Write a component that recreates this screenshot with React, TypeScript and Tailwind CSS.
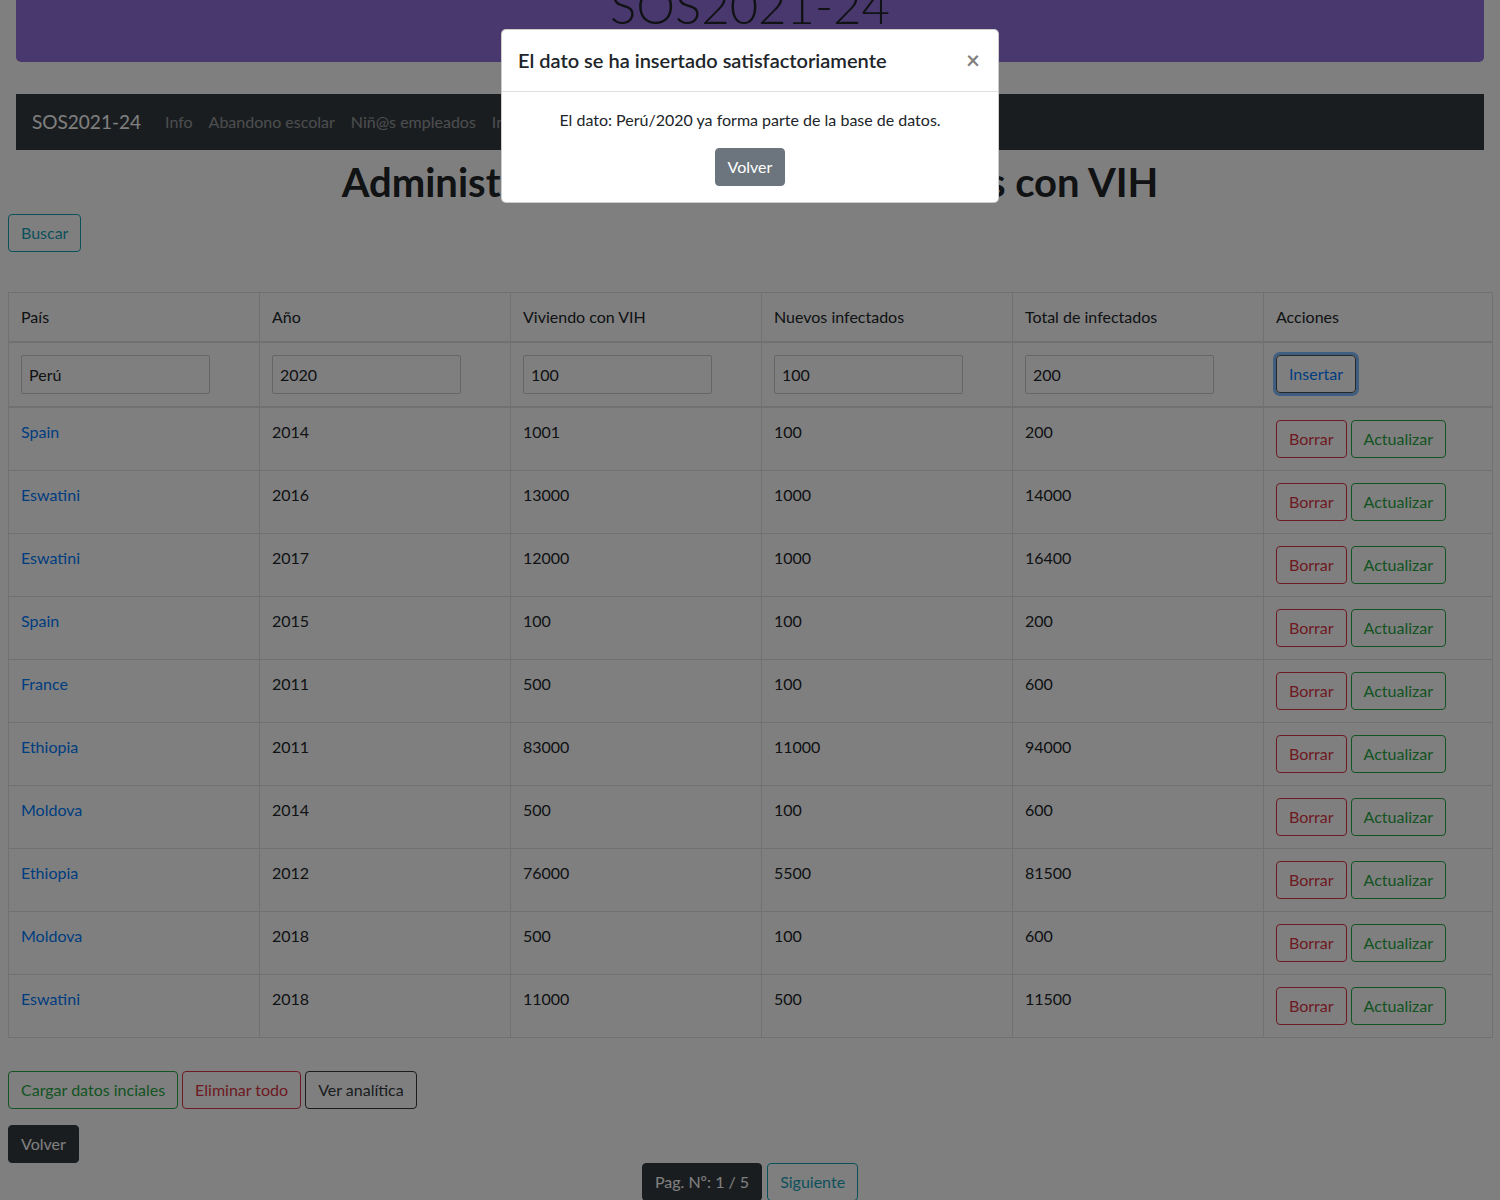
import React from 'react';

// Rows of the VIH table
interface Row {
  country: string;
  year: number;
  living: number;
  newInfected: number;
  total: number;
}

const rows: Row[] = [
  { country: 'Spain', year: 2014, living: 1001, newInfected: 100, total: 200 },
  { country: 'Eswatini', year: 2016, living: 13000, newInfected: 1000, total: 14000 },
  { country: 'Eswatini', year: 2017, living: 12000, newInfected: 1000, total: 16400 },
  { country: 'Spain', year: 2015, living: 100, newInfected: 100, total: 200 },
  { country: 'France', year: 2011, living: 500, newInfected: 100, total: 600 },
  { country: 'Ethiopia', year: 2011, living: 83000, newInfected: 11000, total: 94000 },
  { country: 'Moldova', year: 2014, living: 500, newInfected: 100, total: 600 },
  { country: 'Ethiopia', year: 2012, living: 76000, newInfected: 5500, total: 81500 },
  { country: 'Moldova', year: 2018, living: 500, newInfected: 100, total: 600 },
  { country: 'Eswatini', year: 2018, living: 11000, newInfected: 500, total: 11500 },
];

const variants = {
  'outline-info': 'border-[#17a2b8] text-[#17a2b8] bg-transparent',
  'outline-danger': 'border-[#dc3545] text-[#dc3545] bg-transparent',
  'outline-success': 'border-[#28a745] text-[#28a745] bg-transparent',
  'outline-dark': 'border-[#343a40] text-[#343a40] bg-transparent',
  'outline-primary': 'border-[#4a4f55] text-[#007bff] bg-transparent shadow-[0_0_0_3px_rgba(0,123,255,0.5)]',
  dark: 'border-[#343a40] bg-[#343a40] text-white',
  secondary: 'border-[#6c757d] bg-[#6c757d] text-white',
};

function Btn({ variant, children }: { variant: keyof typeof variants; children: React.ReactNode }) {
  return (
    <button
      className={`inline-flex items-center h-[38px] px-3 border rounded text-base leading-6 ${variants[variant]}`}
    >
      {children}
    </button>
  );
}

const inputs = ['Perú', '2020', '100', '100', '200'];
const headers = ['País', 'Año', 'Viviendo con VIH', 'Nuevos infectados', 'Total de infectados', 'Acciones'];

export default function App() {
  return (
    <div className="relative min-h-[1200px] bg-white text-[#212529] font-['Lato','Liberation_Sans',sans-serif] text-base leading-6 overflow-hidden">
      <main className="px-2">
        {/* Banner */}
        <div className="mx-2 h-[62px] bg-[#9370db] rounded-b-[5px] overflow-hidden text-center">
          <div className="mt-[-24px] text-[49px] leading-[1.2] font-light text-[#212529]">SOS2021-24</div>
        </div>

        {/* Navbar */}
        <nav className="mx-2 mt-8 h-14 bg-[#343a40] flex items-center px-4">
          <span className="text-[19px] text-white mr-4">SOS2021-24</span>
          {['Info', 'Abandono escolar', 'Niñ@s empleados', 'Infectados VIH', 'Integraciones'].map((l) => (
            <a key={l} className="px-2 text-white/50">
              {l}
            </a>
          ))}
        </nav>

        <h1 className="mt-2 mb-2 text-center text-[40px] leading-[1.2] font-bold">
          Administrador de datos de infectados con VIH
        </h1>

        <Btn variant="outline-info">Buscar</Btn>

        {/* Table */}
        <table className="mt-10 w-[1484px] table-fixed border-collapse border border-[#dee2e6]">
          <colgroup>
            <col className="w-[251px]" />
            <col className="w-[251px]" />
            <col className="w-[251px]" />
            <col className="w-[251px]" />
            <col className="w-[251px]" />
            <col className="w-[229px]" />
          </colgroup>
          <thead>
            <tr>
              {headers.map((h) => (
                <th key={h} className="p-3 text-left font-normal align-top border border-[#dee2e6] border-b-2">
                  {h}
                </th>
              ))}
            </tr>
            <tr>
              {inputs.map((v, i) => (
                <td key={i} className="p-3 align-top border border-[#dee2e6] border-b-2">
                  <input
                    readOnly
                    value={v}
                    className="block w-[189px] h-[39px] px-[7px] border border-[#ccc] rounded-[2px] text-[#212529] bg-white"
                  />
                </td>
              ))}
              <td className="p-3 align-top border border-[#dee2e6] border-b-2">
                <Btn variant="outline-primary">Insertar</Btn>
              </td>
            </tr>
          </thead>
          <tbody>
            {rows.map((r, i) => (
              <tr key={i}>
                <td className="p-3 align-top border border-[#dee2e6]">
                  <a className="text-[#007bff]">{r.country}</a>
                </td>
                <td className="p-3 align-top border border-[#dee2e6]">{r.year}</td>
                <td className="p-3 align-top border border-[#dee2e6]">{r.living}</td>
                <td className="p-3 align-top border border-[#dee2e6]">{r.newInfected}</td>
                <td className="p-3 align-top border border-[#dee2e6]">{r.total}</td>
                <td className="p-3 align-top border border-[#dee2e6]">
                  <div className="flex gap-1">
                    <Btn variant="outline-danger">Borrar</Btn>
                    <Btn variant="outline-success">Actualizar</Btn>
                  </div>
                </td>
              </tr>
            ))}
          </tbody>
        </table>

        <div className="mt-[33px] flex gap-1">
          <Btn variant="outline-success">Cargar datos inciales</Btn>
          <Btn variant="outline-danger">Eliminar todo</Btn>
          <Btn variant="outline-dark">Ver analítica</Btn>
        </div>

        <div className="mt-4">
          <Btn variant="dark">Volver</Btn>
        </div>

        <div className="flex justify-center gap-[5px]">
          <Btn variant="dark">Pag. Nº: 1 / 5</Btn>
          <Btn variant="outline-info">Siguiente</Btn>
        </div>
      </main>

      {/* Modal */}
      <div className="absolute inset-0 bg-black/50">
        <div className="mx-auto mt-[29px] w-[498px] bg-white rounded-[5px] border border-black/20">
          <div className="flex items-center justify-between px-4 pt-[15px] pb-4 border-b border-[#dee2e6]">
            <h5 className="text-[20px] leading-[1.5] font-semibold">El dato se ha insertado satisfactoriamente</h5>
            <span className="text-[24px] leading-none font-bold text-black/50 mr-[2px]">×</span>
          </div>
          <div className="p-4 text-center">
            <p>El dato: Perú/2020 ya forma parte de la base de datos.</p>
            <div className="mt-4 flex justify-center">
              <Btn variant="secondary">Volver</Btn>
            </div>
          </div>
        </div>
      </div>
    </div>
  );
}
